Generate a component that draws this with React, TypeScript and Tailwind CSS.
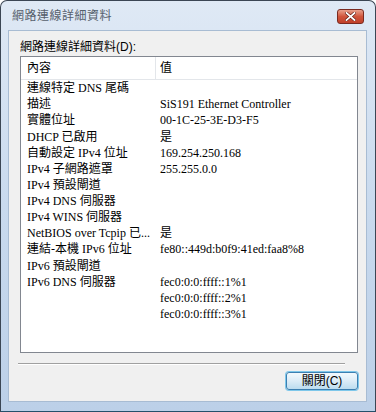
import React from 'react';

const rows: [string, string][] = [
    ['連線特定 DNS 尾碼', ''],
    ['描述', 'SiS191 Ethernet Controller'],
    ['實體位址', '00-1C-25-3E-D3-F5'],
    ['DHCP 已啟用', '是'],
    ['自動設定 IPv4 位址', '169.254.250.168'],
    ['IPv4 子網路遮罩', '255.255.0.0'],
    ['IPv4 預設閘道', ''],
    ['IPv4 DNS 伺服器', ''],
    ['IPv4 WINS 伺服器', ''],
    ['NetBIOS over Tcpip 已...', '是'],
    ['連結-本機 IPv6 位址', 'fe80::449d:b0f9:41ed:faa8%8'],
    ['IPv6 預設閘道', ''],
    ['IPv6 DNS 伺服器', 'fec0:0:0:ffff::1%1'],
    ['', 'fec0:0:0:ffff::2%1'],
    ['', 'fec0:0:0:ffff::3%1'],
];

const uiFont = "font-['Liberation_Sans','Noto_Sans_CJK_TC',sans-serif]";
const listFont = "font-['Liberation_Serif','Noto_Sans_CJK_TC',serif]";

export default function App() {
    return (
        <div className="w-[376px] h-[412px] overflow-hidden bg-white">
            <div className="w-[376px] h-[412px] flex flex-col rounded-t-[7px] border border-[#3b4654] border-b-[#24506a] bg-gradient-to-b from-[#dfe9f5] via-[#c9daee] to-[#bcd0e8]">
                {/* title bar */}
                <div className="h-[29px] flex items-center justify-between pl-[11px] pr-[11px] shrink-0">
                    <span className={`${uiFont} text-[12px] text-[#56606c] tracking-[0.5px]`}>網路連線詳細資料</span>
                    <div className="w-[27px] h-[15px] mt-[2px] rounded-[3px] border border-[#7a2a20] bg-gradient-to-b from-[#e8a08c] via-[#d0553c] to-[#c0402a] flex items-center justify-center">
                        <svg width="11" height="9" viewBox="0 0 11 9">
                            <path d="M1.5 1 L9.5 8 M9.5 1 L1.5 8" stroke="#5a1810" strokeWidth="3" strokeLinecap="square" />
                            <path d="M1.5 1 L9.5 8 M9.5 1 L1.5 8" stroke="#ffffff" strokeWidth="1.8" strokeLinecap="square" />
                        </svg>
                    </div>
                </div>

                {/* client area */}
                <div className="flex-1 ml-[7px] mr-[8px] mb-[9px] border border-[#a8bcd3] bg-[#f0f0f0] flex flex-col pl-[11px] pr-[8px]">
                    <div className={`${uiFont} text-[12px] text-black mt-[9px] h-[14px] leading-[14px]`}>網路連線詳細資料(D):</div>
                    <div className="mt-[2px] h-[297px] border border-[#828790] bg-white flex flex-col">
                        <div className={`${listFont} h-[23px] flex border-b border-[#e3e6ea] text-[12px] text-black`}>
                            <div className="w-[135px] pl-[6px] flex items-center border-r border-[#e3e6ea]">內容</div>
                            <div className="pl-[4px] flex items-center">值</div>
                        </div>
                        <div>
                            {rows.map(([k, v], i) => (
                                <div key={i} className={`${listFont} h-[16.15px] flex items-center text-[12px] text-black whitespace-nowrap`}>
                                    <div className="w-[135px] pl-[6px] overflow-hidden">{k}</div>
                                    <div className="pl-[4px]">{v}</div>
                                </div>
                            ))}
                        </div>
                    </div>
                    <div className="mt-[10px] mr-[13px] ml-[-2px] border-t border-[#a0a0a0] border-b border-b-white" />
                    <div className="flex justify-end mt-[7px]">
                        <button className={`${uiFont} w-[72px] h-[18px] rounded-[3px] border border-[#3c7fb1] bg-gradient-to-b from-[#f2f9fd] via-[#dcecf7] to-[#bcdcef] shadow-[0_0_0_1px_#7ec7ea] text-[12px] text-black leading-none`}>
                            關閉(C)
                        </button>
                    </div>
                </div>
            </div>
        </div>
    );
}
